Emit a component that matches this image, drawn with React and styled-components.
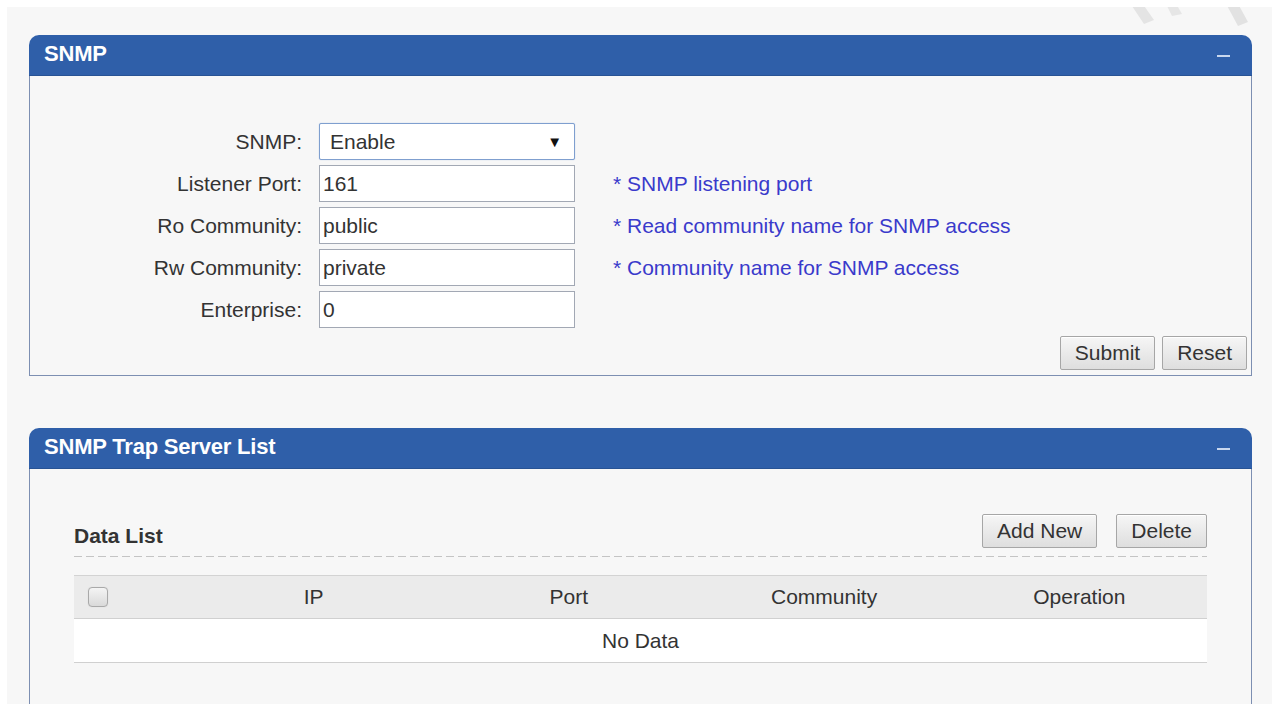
import React from "react";
import styled, { createGlobalStyle } from "styled-components";

const GlobalStyle = createGlobalStyle`
  html, body {
    margin: 0;
    padding: 0;
    background: #ffffff;
    font-family: "Liberation Sans", Arial, sans-serif;
    color: #333;
    overflow: hidden;
  }
  * { box-sizing: border-box; }
`;

const Page = styled.div`
  position: relative;
  margin: 7px 0 0 7px;
  padding: 28px 20px 0 22px;
  min-height: calc(100vh - 7px);
  background: #f7f7f7;
  overflow: hidden;
`;

const Watermark = styled.svg`
  position: absolute;
  top: -7px;
  right: 12px;
  width: 140px;
  height: 30px;
  pointer-events: none;
`;

const Panel = styled.section`
  & + & {
    margin-top: 52px;
  }
`;

const PanelHeader = styled.header`
  height: 41px;
  display: flex;
  align-items: center;
  justify-content: space-between;
  padding: 0 22px 2px 15px;
  background: #2f5fa9;
  border-radius: 10px 10px 0 0;
  border-bottom: 1px solid #285394;
  color: #fff;
  font-weight: bold;
  font-size: 22px;
  letter-spacing: -0.2px;
`;

const Collapse = styled.span`
  display: block;
  width: 13px;
  height: 2px;
  margin-top: 4px;
  background: #c9d7ee;
`;

const PanelBody = styled.div`
  border: 1px solid #7d8fb2;
  border-top: none;
  background: #f7f7f7;
  padding: ${(p) => p.$pad};
`;

const FormGrid = styled.div`
  display: grid;
  grid-template-columns: 272px 256px auto;
  grid-auto-rows: 37px;
  row-gap: 5px;
  column-gap: 17px;
  align-items: center;
  font-size: 21px;
`;

const Label = styled.label`
  text-align: right;
  color: #333;
`;

const Field = styled.div`
  height: 37px;
  display: flex;
  align-items: center;
  justify-content: space-between;
  padding: 0 ${(p) => (p.$select ? "12px" : "3px")} 0 ${(p) => (p.$select ? "10px" : "3px")};
  background: #fff;
  border: 1px solid ${(p) => (p.$select ? "#7f9fcf" : "#a2a8b4")};
  border-radius: ${(p) => (p.$select ? "2px" : "0")};
  box-shadow: ${(p) => (p.$select ? "0 0 1px #9ab6e0" : "none")};
  color: #333;
  font-size: 21px;
`;

const Arrow = styled.span`
  font-size: 15px;
  color: #111;
`;

const Hint = styled.span`
  margin-left: 21px;
  color: #3a3acb;
  font-size: 21px;
  white-space: nowrap;
`;

const ButtonRow = styled.div`
  display: flex;
  justify-content: flex-end;
  gap: 7px;
  margin-top: 8px;
  padding: 0 4px 5px 0;
`;

const Button = styled.button`
  height: 34px;
  padding: 0 14px;
  font-family: "Liberation Sans", Arial, sans-serif;
  font-size: 21px;
  color: #333;
  background: linear-gradient(#f6f6f6, #dedede);
  border: 1px solid #a6a6a6;
  border-radius: 2px;
  box-shadow: inset 0 1px 0 #fff;
  cursor: pointer;
`;

const Toolbar = styled.div`
  display: flex;
  justify-content: space-between;
  align-items: flex-end;
  padding-bottom: 8px;
`;

const Actions = styled.div`
  display: flex;
  gap: 19px;
`;

const Title = styled.h3`
  margin: 0;
  font-size: 21px;
  line-height: 24px;
  font-weight: bold;
  color: #333;
`;

const Dashed = styled.div`
  height: 1px;
  background: repeating-linear-gradient(
    to right,
    #c4c4c4 0 8px,
    transparent 8px 12px
  );
`;

const Table = styled.div`
  margin-top: 18px;
  font-size: 21px;
  color: #333;
`;

const Row = styled.div`
  display: grid;
  grid-template-columns: 112px repeat(4, 1fr);
  height: 44px;
  align-items: center;
  background: ${(p) => (p.$head ? "#ebebeb" : "#fff")};
  border-top: ${(p) => (p.$head ? "1px solid #d3d3d3" : "none")};
  border-bottom: 1px solid #d0d0d0;
`;

const Cell = styled.div`
  text-align: center;
`;

const CheckCell = styled.div`
  padding-left: 14px;
  display: flex;
  align-items: center;
`;

const Check = styled.span`
  width: 20px;
  height: 20px;
  border: 1px solid #a9a9a9;
  border-radius: 4px;
  background: linear-gradient(#f4f4f4, #d9d9d9);
  box-shadow: 0 0 1px #ccc;
`;

const EmptyRow = styled.div`
  height: 44px;
  display: flex;
  align-items: center;
  justify-content: center;
  background: #fff;
  border-bottom: 1px solid #d0d0d0;
`;

const fields = [
  { label: "Listener Port:", value: "161", hint: "* SNMP listening port" },
  { label: "Ro Community:", value: "public", hint: "* Read community name for SNMP access" },
  { label: "Rw Community:", value: "private", hint: "* Community name for SNMP access" },
  { label: "Enterprise:", value: "0" },
];

export default function App() {
  return (
    <>
      <GlobalStyle />
      <Page>
        <Watermark viewBox="0 0 140 30">
          <polygon points="8,0 20,0 34,20 24,24" fill="#e4e4e4" />
          <polygon points="44,0 54,0 62,14 52,16" fill="#e6e6e6" />
          <polygon points="104,0 116,0 128,22 118,26" fill="#e2e2e2" />
        </Watermark>

        <Panel>
          <PanelHeader>
            SNMP
            <Collapse />
          </PanelHeader>
          <PanelBody $pad="47px 0 0 0">
            <FormGrid>
              <Label>SNMP:</Label>
              <Field $select>
                Enable
                <Arrow>▼</Arrow>
              </Field>
              <span />
              {fields.map((f) => (
                <React.Fragment key={f.label}>
                  <Label>{f.label}</Label>
                  <Field>{f.value}</Field>
                  {f.hint ? <Hint>{f.hint}</Hint> : <span />}
                </React.Fragment>
              ))}
            </FormGrid>
            <ButtonRow>
              <Button>Submit</Button>
              <Button>Reset</Button>
            </ButtonRow>
          </PanelBody>
        </Panel>

        <Panel>
          <PanelHeader>
            SNMP Trap Server List
            <Collapse />
          </PanelHeader>
          <PanelBody $pad="45px 44px 60px 44px">
            <Toolbar>
              <Title>Data List</Title>
              <Actions>
                <Button>Add New</Button>
                <Button>Delete</Button>
              </Actions>
            </Toolbar>
            <Dashed />
            <Table>
              <Row $head>
                <CheckCell>
                  <Check />
                </CheckCell>
                <Cell>IP</Cell>
                <Cell>Port</Cell>
                <Cell>Community</Cell>
                <Cell>Operation</Cell>
              </Row>
              <EmptyRow>No Data</EmptyRow>
            </Table>
          </PanelBody>
        </Panel>
      </Page>
    </>
  );
}
